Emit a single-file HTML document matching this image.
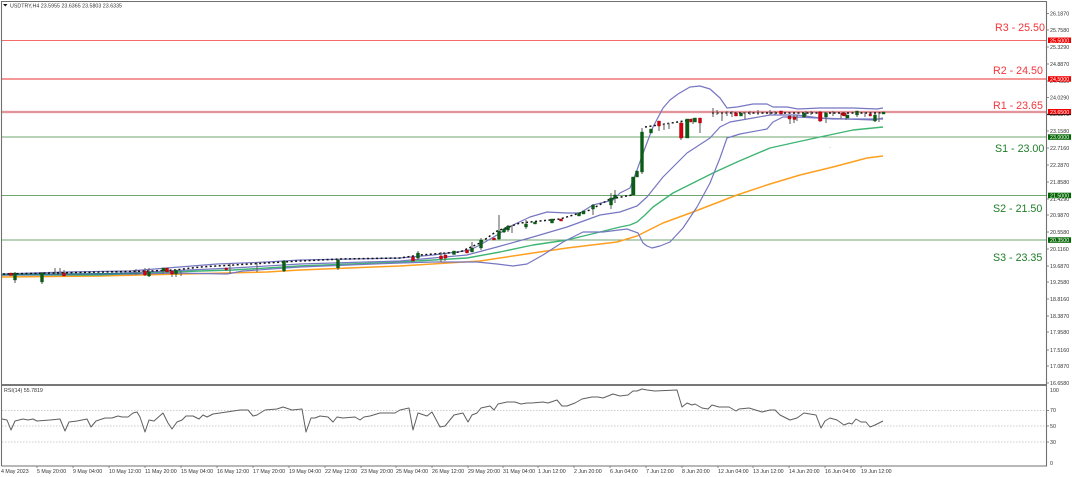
<!DOCTYPE html>
<html>
<head>
<meta charset="utf-8">
<style>
html,body{margin:0;padding:0;background:#fff;width:1072px;height:477px;overflow:hidden}
svg{display:block;filter:blur(.3px)}
text{font-family:"Liberation Sans",sans-serif}
.a text{font-size:5.3px;fill:#333}
.big{font-size:10.7px}
.tag{font-size:5.3px;fill:#fff}
</style>
</head>
<body>
<svg width="1072" height="477" viewBox="0 0 1072 477" xmlns="http://www.w3.org/2000/svg">
<rect width="1072" height="477" fill="#fff"/>

<!-- levels -->
<g fill="none" stroke-width="1">
<path d="M2 40.500H1046" stroke="#f26a6a" stroke-width="1.100"/>
<path d="M2 79H1046" stroke="#f8c4c4" stroke-width="2"/>
<path d="M2 79H1046" stroke="#f06c6c" stroke-width="1"/>
<path d="M2 112H1046" stroke="#f0b8ba" stroke-width="2.400"/>
<path d="M2 112H1046" stroke="#d97f86" stroke-width="1.200"/>
<path d="M2 137H1046" stroke="#6fa56f" stroke-width="1.100"/>
<path d="M2 195.500H1046" stroke="#6fa56f" stroke-width="1.100"/>
<path d="M2 240H1046" stroke="#6fa56f" stroke-width="1.100"/>
</g>

<!-- moving averages and bands -->
<g fill="none" stroke-width="1.200" stroke-linejoin="round">
<path stroke="#ff9f1f" stroke-width="1.500" d="M2 277L100 276L140 275L227 273L267 272L300 270L400 266L480 261L533 253L567 248L617 242L637 236L663 223L693 212L737 195L770 184L800 175L833 167L867 158L883 156"/>
<path stroke="#3fb573" stroke-width="1.400" d="M2 275L100 275L167 272L233 270L300 266L400 262L467 258L500 252L533 245L567 240L600 232L620 227L630 225L637 222L645 215L653 207L673 193L713 173L737 162L770 148L797 142L820 137L853 130L883 127"/>
<path stroke="#7676c2" d="M2 274L67 272L130 271L167 268L217 264L267 262L300 260L400 258L433 255L457 252L470 250L480 245L497 235L513 225L530 217L547 212L567 213L580 213L593 205L613 200L620 193L630 188L637 170L645 148L653 127L663 108L670 100L678 94L690 87L700 86L710 89L720 98L727 108L737 107L753 104L767 104L773 107L787 107L798 109L820 108L853 108L877 109L883 108"/>
<path stroke="#7676c2" d="M2 275L100 274L167 271L233 268L300 264L400 261L433 258L467 255L497 247L533 237L567 227L600 215L620 212L637 206L647 197L663 177L687 153L710 138L720 127L730 122L753 118L770 115L797 115L820 118L847 119L873 120L883 118"/>
<path stroke="#7676c2" d="M2 275L133 274L177 273L227 274L243 271L300 267L400 263L433 262L477 262L497 264L513 266L527 264L543 255L563 242L583 232L603 232L627 229L638 233L643 243L647 246L652 248L660 246L670 242L683 228L697 207L710 183L720 158L727 138L740 134L767 129L773 122L783 117L797 117L817 118L833 119L883 119"/>
<path stroke="#2f7d8e" stroke-width="1.600" d="M2 274.500L70 274L140 273.500"/>
</g>

<!-- doji trail -->
<path fill="none" stroke="#111" stroke-width="1.500" stroke-dasharray="2 2.500" d="M3 274L150 271L175 270L200 267L250 264L300 261L340 259L400 258L420 255L460 252L480 243L497 231L520 223L560 219L590 210L610 199L632 195M645 127L665 124L690 120M712 113L885 113"/>

<!-- wicks -->
<path fill="none" stroke="#666" stroke-width="1.100" d="M15 272V283M42 272V284M55 268V274M60 268V274M64 270V276M136 269V275M145 268V276M149 268V277M163 268V274M172 271V277M176 270V277M181 271V276M230 263V274M257 262V272M284 260V272M338 259V270M418 251V260M441 252V262M445 253V261M472 242V250M481 238V250M499 215V240M504 228V233M508 225V232M512 225V233M526 220V229M593 204V215M611 193V209M615 190V203M642 128V174M659 121V131M664 124V130M669 123V129M681 122V140M700 118V133M693 118V124M713 108V117M717 110V115M722 112V121M727 111V116M732 111V117M745 112V119M750 111V115M758 110V115M770 110V115M775 111V115M790 115V124M794 115V123M797 115V121M806 111V116M811 111V115M820 111V122M826 112V123M833 111V116M841 113V119M846 113V120M857 112V117M865 112V117M875 114V122M879 113V122"/>

<!-- green bodies -->
<path fill="#0b5c17" stroke="#0b5c17" stroke-width=".4" d="M13.500 273h3v7h-3zM40.500 273h3v9h-3zM147.500 272h3v4h-3zM162 268h3v3h-3zM174.500 270h3v4h-3zM282.500 261h3v10h-3zM336.500 260h3v8h-3zM416.500 253h3v5h-3zM452.500 251h3v3.500h-3zM470.500 248h3v4h-3zM479.500 240h3v8h-3zM497.500 231h3v8h-3zM502.500 229h3v3h-3zM506.500 226h3v4h-3zM524.500 224h3v3h-3zM533.500 222h3v2h-3zM550.500 219h3v4h-3zM577.500 213h3v3h-3zM582 211h3v3h-3zM591.500 205h3v4h-3zM609.500 198h3v7h-3zM613.500 195h3v3.500h-3zM631.500 177h3.500v18h-3.500zM635.500 171h3v6h-3zM640.500 132h3v40h-3zM649.500 129h3v4h-3zM685.500 119h3.500v19h-3.500zM693.500 118h3v4h-3zM739.500 113h3v3h-3zM802.500 113h3v4h-3zM824.500 113h3v4h-3zM846 115h3v3h-3zM855.500 111h3v4h-3zM873.500 115h3v6h-3zM882 112h3v2h-3z"/>

<!-- red bodies -->
<path fill="#d8000c" stroke="#8a0a10" stroke-width=".4" d="M9.500 273h3v2.500h-3zM62.500 273h3v3h-3zM143.500 271h3v4h-3zM165.500 268h3v4h-3zM170.500 271h3v3h-3zM225 268h2.500v2h-2.500zM411.500 257h3v4h-3zM439.500 256h3v3h-3zM444 255h3v3h-3zM465.500 250h3v3h-3zM492.500 238h3v2h-3zM559.500 219h3v2h-3zM657.500 121h3v5h-3zM679.500 123h3.500v15h-3.500zM689.500 119h2.500v3h-2.500zM698.500 118h3v5h-3zM734.500 113h3v3h-3zM779.500 111h3v3h-3zM788 116h3v3h-3zM793 117h3v2.500h-3zM818.500 112h3.500v9h-3.500zM841 113h2.500v2h-2.500zM842.500 113h3v3h-3zM869 114h2.500v2h-2.500z"/>
<circle cx="830" cy="147.500" r=".8" fill="#ddd"/>

<!-- frame -->
<path fill="none" stroke="#707070" stroke-width="1.100" d="M1.500 466V1.500H1046.500V466H1.500"/>
<path d="M2 385H1046" stroke="#787878" stroke-width="2" fill="none"/>

<!-- header -->
<path d="M3 4h4.500l-2.200 2.500z" fill="#111"/>
<text x="10" y="7.500" font-size="5.300" fill="#333" textLength="112">USDTRY,H4  23.5955 23.6365 23.5803 23.6335</text>
<text x="4" y="392" font-size="5.300" fill="#333">RSI(14) 55.7819</text>

<!-- level captions -->
<g class="big">
<text class="big" x="995" y="31" fill="#f5343a">R3 - 25.50</text>
<text class="big" x="993" y="74" fill="#f5343a">R2 - 24.50</text>
<text class="big" x="993" y="109" fill="#f5343a">R1 - 23.65</text>
<text class="big" x="995" y="152" fill="#1f7d28">S1 - 23.00</text>
<text class="big" x="993" y="212" fill="#1f7d28">S2 - 21.50</text>
<text class="big" x="993" y="261" fill="#1f7d28">S3 - 23.35</text>
</g>

<!-- price axis -->
<path fill="none" stroke="#666" stroke-width=".7" d="M1047 13.500h2M1047 30h2M1047 47h2M1047 64h2M1047 81h2M1047 97.500h2M1047 114h2M1047 131h2M1047 148h2M1047 165h2M1047 182h2M1047 199h2M1047 215h2M1047 232h2M1047 249h2M1047 266h2M1047 282h2M1047 299h2M1047 316h2M1047 332h2M1047 350h2M1047 366h2M1047 383h2"/>
<g class="a">
<text x="1050" y="15.500">26.1870</text>
<text x="1050" y="32">25.7580</text>
<text x="1050" y="49">25.3290</text>
<text x="1050" y="66">24.8870</text>
<text x="1050" y="83">24.4580</text>
<text x="1050" y="99.500">24.0290</text>
<text x="1050" y="116">23.5870</text>
<text x="1050" y="133">23.1580</text>
<text x="1050" y="150">22.7160</text>
<text x="1050" y="167">22.2870</text>
<text x="1050" y="184">21.8580</text>
<text x="1050" y="201">21.4290</text>
<text x="1050" y="217">20.9870</text>
<text x="1050" y="234">20.5580</text>
<text x="1050" y="251">20.1160</text>
<text x="1050" y="268">19.6870</text>
<text x="1050" y="284">19.2580</text>
<text x="1050" y="301">18.8160</text>
<text x="1050" y="318">18.3870</text>
<text x="1050" y="334">17.9580</text>
<text x="1050" y="352">17.5160</text>
<text x="1050" y="368">17.0870</text>
<text x="1050" y="385">16.6580</text>
</g>

<!-- price tags -->
<rect x="1048" y="37.500" width="23" height="5.500" fill="#f00000"/>
<rect x="1048" y="76.200" width="23" height="5.500" fill="#f00000"/>
<rect x="1048" y="109" width="23" height="5.500" fill="#f00000"/>
<path d="M1047 114.700h24" stroke="#111" stroke-width=".8"/>
<rect x="1048" y="134.300" width="23" height="5.500" fill="#006400"/>
<rect x="1048" y="192.700" width="23" height="5.500" fill="#006400"/>
<rect x="1048" y="237.300" width="23" height="5.500" fill="#006400"/>
<text class="tag" x="1050" y="42.300">25.5000</text>
<text class="tag" x="1050" y="81">24.5000</text>
<text class="tag" x="1050" y="113.800">23.6500</text>
<text class="tag" x="1050" y="139">23.0000</text>
<text class="tag" x="1050" y="197.500">21.5000</text>
<text class="tag" x="1050" y="242">20.3500</text>

<!-- RSI grid -->
<g fill="none" stroke="#bdbdbd" stroke-width=".8" stroke-dasharray="1.500 1.500">
<path d="M2 410.500H1046M2 426H1046M2 442H1046"/>
</g>
<path fill="none" stroke="#5f5f5f" stroke-width="1" stroke-linejoin="round" d="M2 419L7 420L11 430L15 421L23 419L28 420L33 419L37 421L50 420L60 419L65 431L69 422L77 421L87 419L91 427L96 421L105 418L112 418L118 416L122 417L128 417L133 413L137 412L140 417L145 432L149 420L154 421L163 413L168 423L172 429L177 422L182 420L186 416L193 416L199 419L203 415L207 417L213 414L220 413L240 410L248 410L253 416L257 415L265 410L277 409L283 407L292 410L302 409L306 432L311 418L315 418L320 416L328 417L333 422L337 417L343 418L355 417L360 420L364 417L370 416L380 413L395 413L400 410L409 408L413 430L418 413L427 416L432 412L440 427L445 426L454 415L463 413L468 422L472 415L477 413L481 408L490 406L494 410L498 404L507 402L515 402L521 404L527 403L532 403L543 402L548 403L557 400L562 406L567 406L575 403L582 399L592 397L598 397L603 398L613 394L620 396L628 395L633 391L637 391L642 389L647 390L655 391L677 390L682 407L687 403L692 405L695 404L702 408L708 409L712 405L719 407L729 407L736 411L739 409L749 408L762 412L770 410L775 410L780 415L790 420L797 418L804 413L816 415L821 428L825 421L830 418L837 420L844 425L849 423L852 424L856 419L861 422L866 422L870 427L875 425L883 421"/>
<path fill="none" stroke="#666" stroke-width=".7" d="M1047 410.500h2M1047 426h2M1047 442h2"/>
<g class="a">
<text x="1050" y="392">100</text>
<text x="1050" y="412">70</text>
<text x="1050" y="428">50</text>
<text x="1050" y="444">30</text>
<text x="1050" y="465">0</text>
</g>

<!-- time axis -->
<path fill="none" stroke="#666" stroke-width=".7" d="M37 466v2M73 466v2M109 466v2M145 466v2M181 466v2M217 466v2M253 466v2M289 466v2M325 466v2M361 466v2M396 466v2M432 466v2M468 466v2M503 466v2M538 466v2M574 466v2M610 466v2M646 466v2M682 466v2M718 466v2M753 466v2M789 466v2M825 466v2M861 466v2"/>
<g class="a">
<text x="1" y="473">4 May 2023</text>
<text x="37" y="473">5 May 20:00</text>
<text x="73" y="473">9 May 04:00</text>
<text x="109" y="473">10 May 12:00</text>
<text x="145" y="473">11 May 20:00</text>
<text x="181" y="473">15 May 04:00</text>
<text x="217" y="473">16 May 12:00</text>
<text x="253" y="473">17 May 20:00</text>
<text x="289" y="473">19 May 04:00</text>
<text x="325" y="473">22 May 12:00</text>
<text x="361" y="473">23 May 20:00</text>
<text x="396" y="473">25 May 04:00</text>
<text x="432" y="473">26 May 12:00</text>
<text x="468" y="473">29 May 20:00</text>
<text x="503" y="473">31 May 04:00</text>
<text x="538" y="473">1 Jun 12:00</text>
<text x="574" y="473">2 Jun 20:00</text>
<text x="610" y="473">6 Jun 04:00</text>
<text x="646" y="473">7 Jun 12:00</text>
<text x="682" y="473">8 Jun 20:00</text>
<text x="718" y="473">12 Jun 04:00</text>
<text x="753" y="473">13 Jun 12:00</text>
<text x="789" y="473">14 Jun 20:00</text>
<text x="825" y="473">16 Jun 04:00</text>
<text x="861" y="473">19 Jun 12:00</text>
</g>
</svg>
</body>
</html>
